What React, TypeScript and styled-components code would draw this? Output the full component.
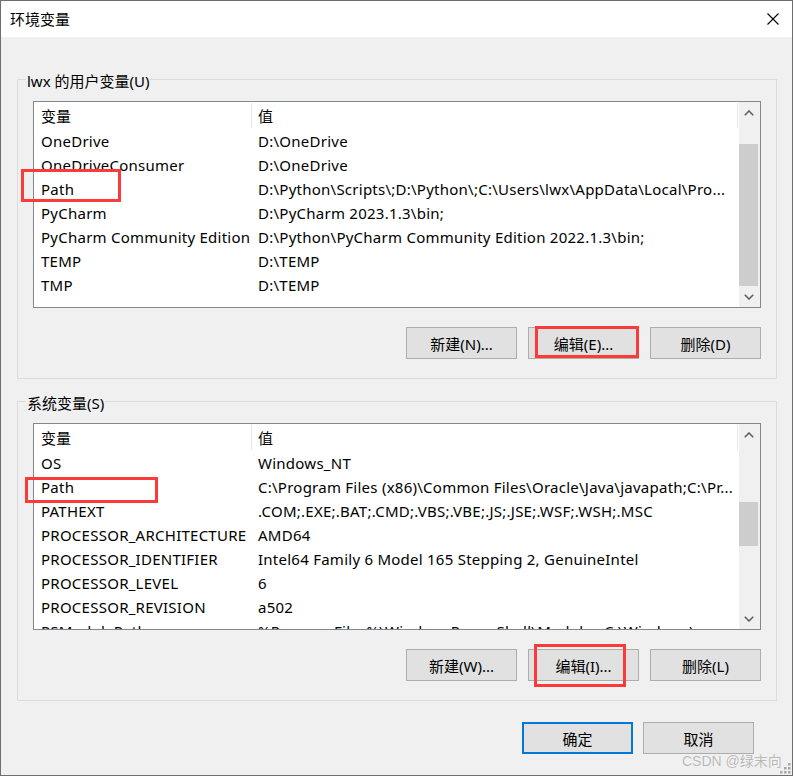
import React from 'react';
import styled, { createGlobalStyle } from 'styled-components';

const FONT = `"Noto Sans", "Noto Sans CJK SC", sans-serif`;

const GlobalStyle = createGlobalStyle`
  html, body { margin: 0; padding: 0; background: #ffffff; }
  body { font-family: ${FONT}; }
  * { box-sizing: border-box; }
`;

const Window = styled.div`
  position: relative;
  width: 793px;
  height: 776px;
  border: 1px solid #6f6f6f;
  background: #f0f0f0;
  display: flex;
  flex-direction: column;
  font-family: ${FONT};
  font-size: 15px;
  color: #000;
  overflow: hidden;
`;

const TitleBar = styled.div`
  height: 36px;
  flex-shrink: 0;
  background: #ffffff;
  display: flex;
  align-items: center;
  justify-content: space-between;
  padding: 0 13px 0 9px;
`;

const Title = styled.span`
  font-size: 15px;
  line-height: 20px;
`;

const CloseIcon = styled.svg`
  width: 12px;
  height: 12px;
  display: block;
`;

const Content = styled.div`
  flex: 1;
  display: flex;
  flex-direction: column;
  padding: 30px 15px 0 16px;
`;

const Group = styled.fieldset`
  margin: 0;
  min-width: 0;
  border: 1px solid #dcdcdc;
  padding: 10px 15px 19px 15px;
  & + & {
    margin-top: 10px;
  }
`;

const Legend = styled.legend`
  padding: 4px 1px 0;
  margin-left: -7px;
  font-size: 15px;
  line-height: 20px;
`;

const ListBox = styled.div`
  height: 207px;
  border: 1px solid #828790;
  background: #ffffff;
  display: flex;
  overflow: hidden;
`;

const ListBody = styled.div`
  flex: 1;
  min-width: 0;
  overflow: hidden;
  display: flex;
  flex-direction: column;
  letter-spacing: 0.25px;
`;

const HeaderRow = styled.div`
  display: flex;
  height: 27px;
  flex-shrink: 0;
`;

const HeaderCell = styled.div<{ $w?: number }>`
  ${(p) => (p.$w ? `width: ${p.$w}px; flex-shrink: 0;` : `flex: 1; margin-right: 1px;`)}
  padding-left: ${(p) => (p.$w ? 7 : 6)}px;
  border-right: 1px solid #e5e5e5;
  margin-top: 1px;
  height: 25px;
  line-height: 26px;
  white-space: nowrap;
  letter-spacing: 0;
`;

const Row = styled.div`
  display: flex;
  height: 24px;
  flex-shrink: 0;
  line-height: 24px;
`;

const NameCell = styled.div`
  width: 218px;
  flex-shrink: 0;
  padding-left: 7px;
  white-space: nowrap;
  overflow: hidden;
`;

const ValueCell = styled.div`
  flex: 1;
  min-width: 0;
  padding-left: 6px;
  white-space: nowrap;
  overflow: hidden;
  text-overflow: clip;
`;

const ScrollBar = styled.div`
  width: 21px;
  flex-shrink: 0;
  background: #f0f0f0;
  display: flex;
  flex-direction: column;
`;

const ArrowBtn = styled.div`
  height: 21px;
  flex-shrink: 0;
  display: flex;
  align-items: center;
  justify-content: center;
  padding-right: 2px;
`;

const Track = styled.div`
  flex: 1;
  display: flex;
  flex-direction: column;
`;

const Thumb = styled.div<{ $offset: number; $size: number }>`
  margin-top: ${(p) => p.$offset}px;
  height: ${(p) => p.$size}px;
  margin-right: 2px;
  background: #cdcdcd;
`;

const ButtonRow = styled.div`
  display: flex;
  justify-content: flex-end;
  gap: 11px;
  margin-top: 19px;
`;

const Button = styled.div<{ $default?: boolean }>`
  width: 111px;
  height: 32px;
  display: flex;
  align-items: center;
  justify-content: center;
  background: #e1e1e1;
  border: ${(p) => (p.$default ? '2px solid #0078d7' : '1px solid #adadad')};
  font-size: 15px;
  white-space: nowrap;
`;

const Footer = styled.div`
  display: flex;
  justify-content: flex-end;
  gap: 10px;
  margin-top: 21px;
  padding-right: 23px;
`;

const Highlight = styled.div<{ $x: number; $y: number; $w: number; $h: number }>`
  position: absolute;
  left: ${(p) => p.$x - 1}px;
  top: ${(p) => p.$y - 1}px;
  width: ${(p) => p.$w}px;
  height: ${(p) => p.$h}px;
  border: 3px solid #fb3a3a;
  pointer-events: none;
`;

const Watermark = styled.div`
  position: absolute;
  left: 681px;
  top: 751px;
  font-size: 14px;
  line-height: 18px;
  color: rgba(175, 175, 175, 0.9);
  text-shadow: 0 0 1px #fff;
  white-space: nowrap;
  font-family: "Liberation Sans", "Noto Sans CJK SC", sans-serif;
`;

const Grip = styled.svg`
  position: absolute;
  right: 1px;
  bottom: 1px;
  width: 12px;
  height: 12px;
`;

type Item = [string, string];

const userVars: Item[] = [
  ['OneDrive', 'D:\\OneDrive'],
  ['OneDriveConsumer', 'D:\\OneDrive'],
  ['Path', 'D:\\Python\\Scripts\\;D:\\Python\\;C:\\Users\\lwx\\AppData\\Local\\Pro...'],
  ['PyCharm', 'D:\\PyCharm 2023.1.3\\bin;'],
  ['PyCharm Community Edition', 'D:\\Python\\PyCharm Community Edition 2022.1.3\\bin;'],
  ['TEMP', 'D:\\TEMP'],
  ['TMP', 'D:\\TEMP'],
];

const sysVars: Item[] = [
  ['OS', 'Windows_NT'],
  ['Path', 'C:\\Program Files (x86)\\Common Files\\Oracle\\Java\\javapath;C:\\Pr...'],
  ['PATHEXT', '.COM;.EXE;.BAT;.CMD;.VBS;.VBE;.JS;.JSE;.WSF;.WSH;.MSC'],
  ['PROCESSOR_ARCHITECTURE', 'AMD64'],
  ['PROCESSOR_IDENTIFIER', 'Intel64 Family 6 Model 165 Stepping 2, GenuineIntel'],
  ['PROCESSOR_LEVEL', '6'],
  ['PROCESSOR_REVISION', 'a502'],
  ['PSModulePath', '%ProgramFiles%\\WindowsPowerShell\\Modules;C:\\Windows\\...'],
];

const Chevron = ({ up }: { up?: boolean }) => (
  <svg width="10" height="6" viewBox="0 0 10 6">
    <polyline
      points={up ? '0.8,5.2 5,1 9.2,5.2' : '0.8,0.8 5,5 9.2,0.8'}
      fill="none"
      stroke="#606060"
      strokeWidth="1.6"
    />
  </svg>
);

const VarList = ({ items, thumbOffset, thumbSize }: { items: Item[]; thumbOffset: number; thumbSize: number }) => (
  <ListBox>
    <ListBody>
      <HeaderRow>
        <HeaderCell $w={218}>变量</HeaderCell>
        <HeaderCell>值</HeaderCell>
      </HeaderRow>
      {items.map(([n, v], i) => (
        <Row key={i}>
          <NameCell>{n}</NameCell>
          <ValueCell>{v}</ValueCell>
        </Row>
      ))}
    </ListBody>
    <ScrollBar>
      <ArrowBtn>
        <Chevron up />
      </ArrowBtn>
      <Track>
        <Thumb $offset={thumbOffset} $size={thumbSize} />
      </Track>
      <ArrowBtn>
        <Chevron />
      </ArrowBtn>
    </ScrollBar>
  </ListBox>
);

export default function App() {
  return (
    <>
      <GlobalStyle />
      <Window>
        <TitleBar>
          <Title>环境变量</Title>
          <CloseIcon viewBox="0 0 12 12">
            <path d="M0.5 0.5 L11.5 11.5 M11.5 0.5 L0.5 11.5" stroke="#000" strokeWidth="1.1" />
          </CloseIcon>
        </TitleBar>
        <Content>
          <Group>
            <Legend>lwx 的用户变量(U)</Legend>
            <VarList items={userVars} thumbOffset={21} thumbSize={142} />
            <ButtonRow>
              <Button>新建(N)...</Button>
              <Button>编辑(E)...</Button>
              <Button>删除(D)</Button>
            </ButtonRow>
          </Group>
          <Group>
            <Legend>系统变量(S)</Legend>
            <VarList items={sysVars} thumbOffset={57} thumbSize={44} />
            <ButtonRow>
              <Button>新建(W)...</Button>
              <Button>编辑(I)...</Button>
              <Button>删除(L)</Button>
            </ButtonRow>
          </Group>
          <Footer>
            <Button $default>确定</Button>
            <Button>取消</Button>
          </Footer>
        </Content>
        <Highlight $x={21} $y={169} $w={100} $h={33} />
        <Highlight $x={535} $y={326} $w={104} $h={32} />
        <Highlight $x={25} $y={477} $w={133} $h={26} />
        <Highlight $x={534} $y={644} $w={92} $h={43} />
        <Watermark>CSDN @绿末向</Watermark>
        <Grip viewBox="0 0 12 12">
          {[
            [9, 1],
            [5, 5],
            [9, 5],
            [1, 9],
            [5, 9],
            [9, 9],
          ].map(([x, y], i) => (
            <rect key={i} x={x} y={y} width="2.5" height="2.5" fill="#a8a8a8" />
          ))}
        </Grip>
      </Window>
    </>
  );
}
